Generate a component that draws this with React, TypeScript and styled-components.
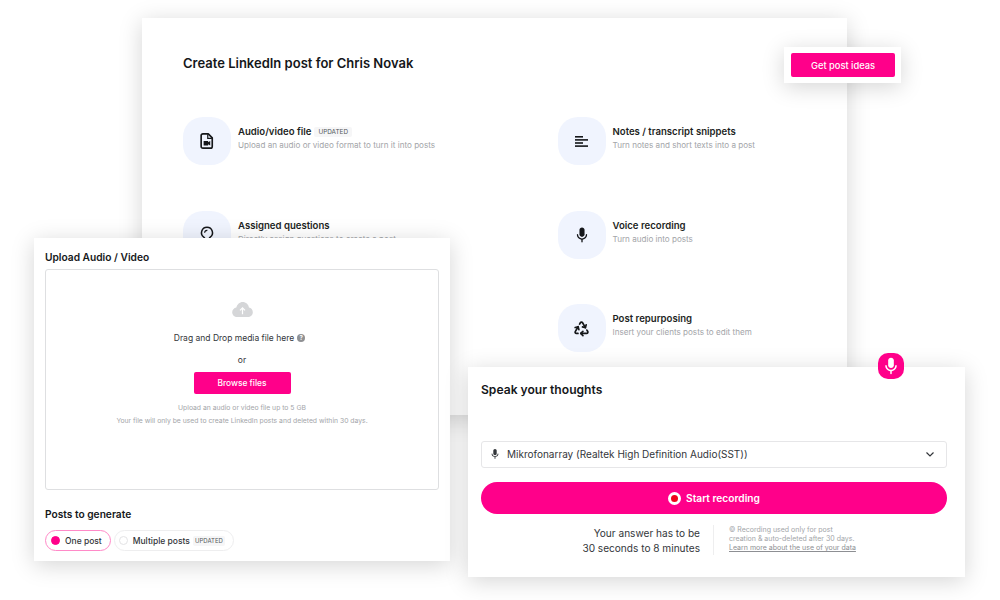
import React from "react";
import styled, { createGlobalStyle } from "styled-components";

const GlobalStyle = createGlobalStyle`
  html, body { margin: 0; padding: 0; background: #fff; }
  body { font-family: Inter, "Liberation Sans", sans-serif; color: #15171a; }
`;

const Canvas = styled.div`
  position: relative;
  width: 1000px;
  height: 600px;
  overflow: hidden;
  background: #fff;
`;

const Panel = styled.div`
  position: absolute;
  background: #fff;
  box-sizing: border-box;
  box-shadow: 0 4px 22px rgba(0, 0, 0, 0.17);
`;

const MainPanel = styled(Panel)`
  left: 142px;
  top: 18px;
  width: 705px;
  height: 397px;
  padding: 36px 41px;
`;

const MainTitle = styled.h1`
  margin: 0;
  font-size: 13px;
  line-height: 18px;
  font-weight: 600;
`;

const OptionGrid = styled.div`
  display: grid;
  grid-template-columns: 374.5px 1fr;
  row-gap: 45.5px;
  margin-top: 45px;
`;

const Option = styled.div`
  display: flex;
  gap: 7px;
  height: 48px;
`;

const OptionIcon = styled.div`
  width: 48px;
  height: 48px;
  flex: none;
  display: flex;
  align-items: center;
  justify-content: center;
  background: #f0f4fe;
  border-radius: 20px;
`;

const OptionBody = styled.div`
  padding-top: 8px;
`;

const OptionTitle = styled.div`
  display: flex;
  align-items: center;
  gap: 3px;
  font-size: 9.6px;
  line-height: 13px;
  font-weight: 600;
  color: #1d1f23;
`;

const OptionText = styled.div`
  margin-top: 1px;
  font-size: 8.1px;
  line-height: 13px;
  color: #a3a5a9;
`;

const Tag = styled.span<{ $large?: boolean }>`
  padding: 0 ${(p) => (p.$large ? 4 : 2)}px;
  font-size: ${(p) => (p.$large ? 6.4 : 6)}px;
  line-height: 10px;
  font-weight: 400;
  color: #55585c;
  background: #f6f6f7;
  border-radius: 2px;
`;

const IdeasPanel = styled(Panel)`
  left: 784px;
  top: 47px;
  width: 117px;
  height: 36px;
  padding: 6px 6px 6px 7px;
`;

const PinkButton = styled.button`
  display: flex;
  align-items: center;
  justify-content: center;
  border: none;
  padding: 0;
  background: #ff008a;
  color: #fff;
  font-family: inherit;
  font-weight: 500;
  font-size: 9.3px;
  border-radius: 2px;
`;

const IdeasButton = styled(PinkButton)`
  width: 104px;
  height: 24px;
`;

const UploadPanel = styled(Panel)`
  left: 34px;
  top: 238px;
  width: 416px;
  height: 323px;
  padding: 12px 11px 0;
`;

const SectionTitle = styled.h2`
  margin: 0;
  font-size: 10.2px;
  line-height: 14px;
  font-weight: 600;
`;

const DropZone = styled.div`
  box-sizing: border-box;
  width: 394px;
  height: 221px;
  margin-top: 5px;
  padding-top: 32px;
  border: 1px solid #dedfe1;
  border-radius: 3px;
  display: flex;
  flex-direction: column;
  align-items: center;
`;

const DropLine = styled.div`
  display: flex;
  align-items: center;
  gap: 3px;
  margin: 15px 5px 0 0;
  height: 12px;
  font-size: 8.5px;
  color: #33363a;
`;

const HelpDot = styled.span`
  width: 8px;
  height: 8px;
  border-radius: 50%;
  background: #8f9194;
  color: #fff;
  font-size: 6px;
  line-height: 8px;
  font-weight: 700;
  text-align: center;
`;

const OrLine = styled.div`
  margin-top: 10px;
  font-size: 8.5px;
  line-height: 12px;
  color: #33363a;
`;

const BrowseButton = styled(PinkButton)`
  width: 97px;
  height: 22px;
  margin-top: 6px;
  font-size: 8.4px;
`;

const FinePrint = styled.div`
  margin-top: 10px;
  font-size: 6.8px;
  line-height: 8px;
  color: #a3a5a9;
  & + & {
    margin-top: 5px;
  }
`;

const PostsTitle = styled(SectionTitle)`
  margin-top: 17px;
`;

const PillRow = styled.div`
  display: flex;
  gap: 3px;
  margin-top: 9px;
`;

const Pill = styled.div<{ $active?: boolean }>`
  box-sizing: border-box;
  height: 21px;
  padding: 0 8px 0 ${(p) => (p.$active ? 5 : 4)}px;
  display: flex;
  align-items: center;
  gap: 5px;
  border: 1px solid ${(p) => (p.$active ? "#ff8ac8" : "#eeeeef")};
  border-radius: 11px;
  font-size: 8.5px;
  font-weight: 500;
  color: #33363a;
`;

const PillTag = styled(Tag)`
  margin-left: -2px;
`;

const RadioDot = styled.span<{ $active?: boolean }>`
  box-sizing: border-box;
  width: 9px;
  height: 9px;
  border-radius: 50%;
  background: ${(p) => (p.$active ? "#ff008a" : "#fff")};
  border: 1px solid ${(p) => (p.$active ? "#ff008a" : "#e3e3e5")};
`;

const SpeakPanel = styled(Panel)`
  left: 468px;
  top: 367px;
  width: 497px;
  height: 210px;
  padding: 15px 18px 0 13px;
`;

const SpeakTitle = styled.h2`
  margin: 0;
  font-size: 12.1px;
  line-height: 15px;
  font-weight: 600;
`;

const MicBadge = styled.div`
  position: absolute;
  left: 878px;
  top: 353px;
  width: 26px;
  height: 26px;
  border-radius: 10px;
  background: #ff008a;
  display: flex;
  align-items: center;
  justify-content: center;
`;

const DeviceSelect = styled.div`
  box-sizing: border-box;
  height: 27px;
  margin-top: 44px;
  padding: 0 11px 1px 7px;
  display: flex;
  align-items: center;
  gap: 6px;
  border: 1px solid #e6e6e8;
  border-radius: 3px;
  font-size: 10px;
  color: #33363a;
`;

const DeviceName = styled.span`
  flex: 1;
`;

const RecordButton = styled(PinkButton)`
  width: 100%;
  height: 32px;
  margin-top: 14px;
  gap: 5px;
  font-size: 10.2px;
  font-weight: 600;
  border-radius: 16px;
`;

const RecordDot = styled.span`
  box-sizing: border-box;
  width: 13px;
  height: 13px;
  border-radius: 50%;
  background: #f0021c;
  border: 3px solid #fff;
`;

const InfoRow = styled.div`
  display: flex;
  margin-top: 11px;
  height: 30px;
`;

const Duration = styled.div`
  width: 219px;
  padding-top: 1px;
  text-align: right;
  font-size: 10.1px;
  line-height: 15px;
  color: #33363a;
`;

const InfoDivider = styled.div`
  width: 1px;
  margin: 0 15px 0 13px;
  background: #eeeeef;
`;

const Disclaimer = styled.div`
  font-size: 7px;
  line-height: 9px;
  color: #a3a5a9;
`;

const DataLink = styled.a`
  color: #8d8f93;
  text-decoration: underline;
  display: block;
`;

const MicGlyph = ({ size, color }: { size: number; color: string }) => (
  <svg width={size} height={size} viewBox="0 0 24 24" fill={color}>
    <path d="M12 14.5c1.9 0 3.4-1.5 3.4-3.4V5.4C15.4 3.5 13.9 2 12 2S8.6 3.5 8.6 5.4v5.7c0 1.9 1.5 3.4 3.4 3.4z" />
    <path d="M18 10.8c-.5 0-.9.4-.9.9 0 2.7-2.3 4.8-5.1 4.8s-5.1-2.1-5.1-4.8c0-.5-.4-.9-.9-.9s-.9.4-.9.9c0 3.3 2.6 6 6 6.5V21c0 .5.4 1 .9 1s.9-.5.9-1v-2.8c3.4-.5 6-3.2 6-6.5 0-.5-.4-.9-.9-.9z" />
  </svg>
);

const FileVideoIcon = () => (
  <svg width="18" height="18" viewBox="0 0 24 24" fill="none">
    <path
      d="M6.5 2.5h7.2l5.3 5.4v11.3c0 1.3-1 2.3-2.3 2.3H6.5c-1.3 0-2.3-1-2.3-2.3V4.8c0-1.3 1-2.3 2.3-2.3z"
      stroke="#15171a"
      strokeWidth="2.2"
      strokeLinejoin="round"
    />
    <path d="M13 3v5.5h5.5" stroke="#15171a" strokeWidth="1.6" />
    <path d="M7.5 12h6v1.8l2.8-1.8v6l-2.800-1.800V18h-6z" fill="#15171a" />
  </svg>
);

const BulbIcon = () => (
  <svg width="18" height="18" viewBox="0 0 24 24" fill="none" stroke="#15171a" strokeWidth="2">
    <path d="M12 1.700a7.300 7.300 0 0 0-4.300 13.200c.7.500 1.300 1.300 1.300 2.200V20h6v-2.900c0-.9.600-1.700 1.300-2.200A7.300 7.300 0 0 0 12 1.700z" />
    <path d="M12.500 5.800a3.500 3.500 0 0 0-3.700 3.200" strokeWidth="1.500" />
  </svg>
);

const LinesIcon = () => (
  <svg width="15" height="15" viewBox="0 0 15 15" fill="#15171a">
    <rect x="1" y="2" width="8" height="1.6" />
    <rect x="1" y="5.1" width="13" height="1.6" />
    <rect x="1" y="8.2" width="8" height="1.6" />
    <rect x="1" y="11.3" width="13" height="1.6" />
  </svg>
);

const RecycleIcon = () => (
  <svg width="17" height="17" viewBox="0 0 24 24" fill="none" stroke="#15171a" strokeWidth="2.4" strokeLinecap="round" strokeLinejoin="round">
    <path d="M7 19H4.800a1.800 1.800 0 0 1-1.600-.9 1.800 1.800 0 0 1 0-1.700L7.200 9.500" />
    <path d="M11 19h8.200a1.800 1.800 0 0 0 1.600-2.700l-1.200-2.100" />
    <path d="M14 16l-3 3 3 3" />
    <path d="M8.300 13.600 7.200 9.500 3.100 10.600" />
    <path d="m9.300 5.800 1.100-1.900a1.800 1.800 0 0 1 3.100 0l4 6.900" />
    <path d="m13.400 9.700 4.100 1.100 1.100-4.100" />
  </svg>
);

const CloudIcon = () => (
  <svg width="21" height="15" viewBox="0 0 22 16">
    <path
      d="M5.400 16C2.400 16 0 13.700 0 10.900c0-2.500 1.900-4.500 4.400-5C5.300 2.500 8 0 11.200 0c3.400 0 6.200 2.600 6.700 5.900C20.200 6.300 22 8.300 22 10.800 22 13.700 19.600 16 16.600 16z"
      fill="#d5d6d8"
    />
    <path d="M11 13V6.500M8.300 9l2.700-2.800L13.700 9" fill="none" stroke="#fff" strokeWidth="1.300" />
  </svg>
);

const Chevron = () => (
  <svg width="10" height="10" viewBox="0 0 10 10" fill="none" stroke="#33363a" strokeWidth="1.200">
    <path d="M1.500 3.500 5 7l3.500-3.500" />
  </svg>
);

const options = [
  {
    icon: <FileVideoIcon />,
    title: "Audio/video file",
    tag: true,
    text: "Upload an audio or video format to turn it into posts",
  },
  {
    icon: <LinesIcon />,
    title: "Notes / transcript snippets",
    text: "Turn notes and short texts into a post",
  },
  {
    icon: <BulbIcon />,
    title: "Assigned questions",
    text: "Directly assign questions to create a post",
  },
  {
    icon: <MicGlyph size={18} color="#15171a" />,
    title: "Voice recording",
    text: "Turn audio into posts",
  },
  { empty: true },
  {
    icon: <RecycleIcon />,
    title: "Post repurposing",
    text: "Insert your clients posts to edit them",
  },
];

export default function App() {
  return (
    <Canvas>
      <GlobalStyle />
      <MainPanel>
        <MainTitle>Create LinkedIn post for Chris Novak</MainTitle>
        <OptionGrid>
          {options.map((o, i) =>
            o.empty ? (
              <div key={i} />
            ) : (
              <Option key={i}>
                <OptionIcon>{o.icon}</OptionIcon>
                <OptionBody>
                  <OptionTitle>
                    {o.title}
                    {o.tag && <Tag $large>UPDATED</Tag>}
                  </OptionTitle>
                  <OptionText>{o.text}</OptionText>
                </OptionBody>
              </Option>
            )
          )}
        </OptionGrid>
      </MainPanel>

      <IdeasPanel>
        <IdeasButton>Get post ideas</IdeasButton>
      </IdeasPanel>

      <UploadPanel>
        <SectionTitle>Upload Audio / Video</SectionTitle>
        <DropZone>
          <CloudIcon />
          <DropLine>
            Drag and Drop media file here <HelpDot>?</HelpDot>
          </DropLine>
          <OrLine>or</OrLine>
          <BrowseButton>Browse files</BrowseButton>
          <FinePrint>Upload an audio or video file up to 5 GB</FinePrint>
          <FinePrint>
            Your file will only be used to create LinkedIn posts and deleted within 30 days.
          </FinePrint>
        </DropZone>
        <PostsTitle>Posts to generate</PostsTitle>
        <PillRow>
          <Pill $active>
            <RadioDot $active />
            One post
          </Pill>
          <Pill>
            <RadioDot />
            Multiple posts
            <PillTag>UPDATED</PillTag>
          </Pill>
        </PillRow>
      </UploadPanel>

      <SpeakPanel>
        <SpeakTitle>Speak your thoughts</SpeakTitle>
        <DeviceSelect>
          <MicGlyph size={12} color="#33363a" />
          <DeviceName>Mikrofonarray (Realtek High Definition Audio(SST))</DeviceName>
          <Chevron />
        </DeviceSelect>
        <RecordButton>
          <RecordDot />
          Start recording
        </RecordButton>
        <InfoRow>
          <Duration>
            Your answer has to be
            <br />
            30 seconds to 8 minutes
          </Duration>
          <InfoDivider />
          <Disclaimer>
            © Recording used only for post
            <br />
            creation &amp; auto-deleted after 30 days.
            <DataLink href="#">Learn more about the use of your data</DataLink>
          </Disclaimer>
        </InfoRow>
      </SpeakPanel>
      <MicBadge>
        <MicGlyph size={20} color="#fff" />
      </MicBadge>
    </Canvas>
  );
}
